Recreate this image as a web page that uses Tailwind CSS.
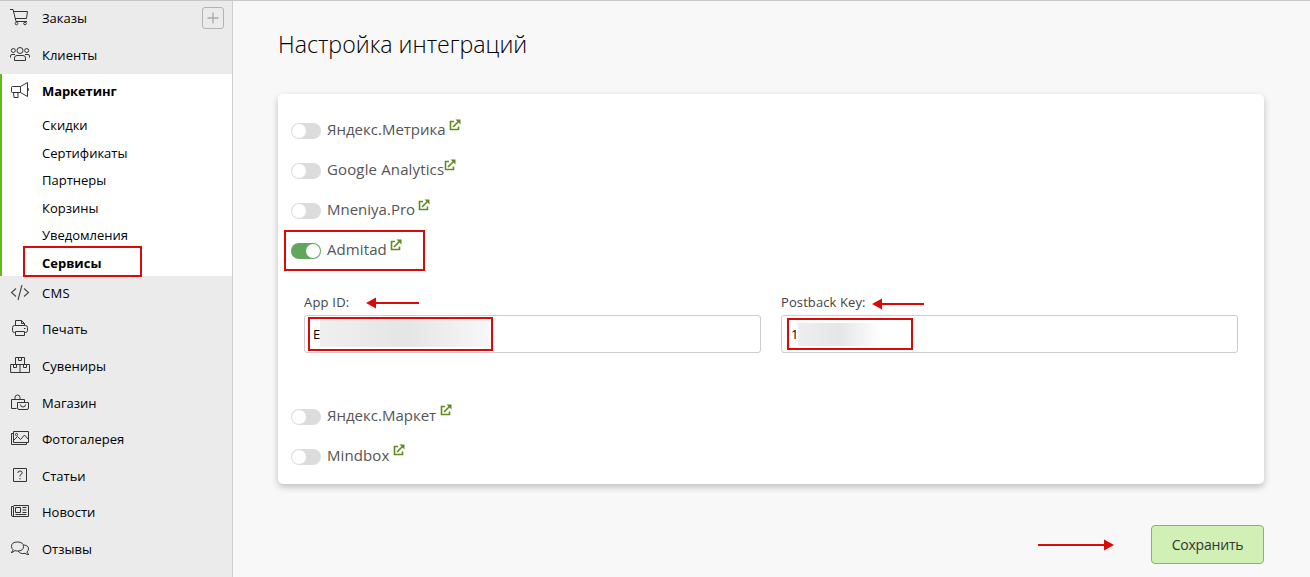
<!DOCTYPE html>
<html lang="ru">
<head>
<meta charset="utf-8">
<title>Настройка интеграций</title>
<script src="https://cdn.jsdelivr.net/npm/@tailwindcss/browser@4"></script>
</head>
<body class="relative h-[577px] w-[1310px] overflow-hidden bg-[#f8f8f8] font-['Open_Sans','Noto_Sans',sans-serif] text-black">
<svg class="hidden">
  <symbol id="ext" viewBox="0 0 12 12"><path d="M5 2.500H1.500v8h8V7.500M4 8 9.500 2.500" fill="none" stroke="#5f8a1e" stroke-width="1.600"/><path d="M6.500 .5H11.500V5.500Z" fill="#5f8a1e"/></symbol>
</svg>
<div class="flex h-full">
  <aside class="h-full w-[233px] shrink-0 border-r border-[#cfcfcf] bg-[#ebebeb] text-[13px] leading-[18px]">
    <div class="flex h-[37px] items-center pb-0.5 pl-2.5">
      <svg class="h-5 w-5" viewBox="0 0 20 20" fill="none" stroke="#333" stroke-width="1"><path d="M0 1.500h3L6 13.500h11M3.700 3.500H17.500L16.500 10.500H5"/><circle cx="6.500" cy="15.500" r="1.300"/><circle cx="15" cy="15.500" r="1.300"/></svg>
      <span class="ml-3">Заказы</span>
      <span class="mr-2 ml-auto flex h-[22px] w-[22px] items-center justify-center rounded-[3px] border border-[#b3b3b3]"><svg class="h-3 w-3" viewBox="0 0 12 12" stroke="#aaa" stroke-width="1.300"><path d="M6 .5v11M.5 6h11"/></svg></span>
    </div>
    <div class="flex h-[37px] items-center pb-0.5 pl-2.5">
      <svg class="h-5 w-5" viewBox="0 0 20 20" fill="none" stroke="#333" stroke-width="1"><circle cx="10" cy="5.500" r="3"/><circle cx="3.300" cy="5.500" r="2"/><circle cx="16.700" cy="5.500" r="2"/><path d="M4.500 15.500v-2.500q0-2.500 2.500-2.500h6q2.500 0 2.500 2.500v2.500ZM.5 12.500v-1.500q0-1.500 1.500-1.500h3M19.500 12.500v-1.500q0-1.500-1.500-1.500h-3"/></svg>
      <span class="ml-3">Клиенты</span>
    </div>
    <div class="h-[202px] border-l-2 border-[#62bb14] bg-white pl-2">
      <div class="flex h-9 items-center pb-0.5 font-bold">
        <svg class="h-5 w-5" viewBox="0 0 20 20" fill="none" stroke="#333" stroke-width="1"><path d="M10.500 5.500h-8Q1.500 5.500 1.500 6.500v4Q1.500 11.500 2.500 11.500h8ZM10.500 5.500 17.500 1.500v14l-7-4M3.500 11.500l.5 5h4v-5M17.500 7q1 0 1 1.500t-1 1.500"/></svg>
        <span class="ml-3 tracking-[-.1px]">Маркетинг</span>
      </div>
      <div class="mt-0.5 pl-8 leading-[27.600px]">
        <div>Скидки</div><div>Сертификаты</div><div>Партнеры</div><div>Корзины</div><div>Уведомления</div><div class="font-bold">Сервисы</div>
      </div>
    </div>
    <div class="flex h-[36.600px] items-center pb-[3px] pl-2.5">
      <svg class="h-5 w-5" viewBox="0 0 20 20" fill="none" stroke="#444" stroke-width="1.100"><path d="M6 5.500 1.500 9.500 6 13.500M14 5.500l4.500 4-4.500 4M12 2 8 17"/></svg>
      <span class="ml-3 tracking-[.3px]">CMS</span>
    </div>
    <div class="flex h-[36.600px] items-center pb-[3px] pl-2.5">
      <svg class="h-5 w-5" viewBox="0 0 20 20" fill="none" stroke="#333" stroke-width="1"><path d="M5.500 6.500v-5h6l3 3v2M11.500 1.500v3h3M5.500 13.500h-1q-2 0-2-2v-3q0-2 2-2h11q2 0 2 2v3q0 2-2 2h-1M5.500 12.500h9v4h-9ZM14 9.500h1.500"/></svg>
      <span class="ml-3">Печать</span>
    </div>
    <div class="flex h-[36.600px] items-center pb-[3px] pl-2.5">
      <svg class="h-5 w-5" viewBox="0 0 20 20" fill="none" stroke="#333" stroke-width="1"><path d="M.6 8.500h18.900v8H.6ZM10 8.500v8M5.500 8.500v-7h9v7M8.500 1.500v3h3v-3M3.500 8.500v3h3v-3M13.500 8.500v3h3v-3"/></svg>
      <span class="ml-3">Сувениры</span>
    </div>
    <div class="flex h-[36.600px] items-center pb-[3px] pl-2.5">
      <svg class="h-5 w-5" viewBox="0 0 20 20" fill="none" stroke="#333" stroke-width="1"><path d="M6.500 15.500h-5v-9h13v3M5 6.500v-2q0-2.500 2.500-2.500T10 4.500v2M7.500 9.500h11v5.500q0 1.500-1.500 1.500H9q-1.500 0-1.500-1.500ZM10.500 11.500q0 2.500 2.500 2.500t2.500-2.500"/></svg>
      <span class="ml-3">Магазин</span>
    </div>
    <div class="flex h-[36.600px] items-center pb-[3px] pl-2.5">
      <svg class="h-5 w-5" viewBox="0 0 20 20" fill="none" stroke="#333" stroke-width="1"><path d="M3.500 2.500h15v11h-15ZM3.500 4.500h-2v11h15v-2M4 11l3.500-3.500 3 3 4-4.500 4 4.500"/><circle cx="6.500" cy="5.500" r="1.100"/></svg>
      <span class="ml-3">Фотогалерея</span>
    </div>
    <div class="flex h-[36.600px] items-center pb-[3px] pl-2.5">
      <svg class="h-5 w-5" viewBox="0 0 20 20" fill="none" stroke="#333" stroke-width="1"><path d="M3.500 2.500h13v13h-13ZM7.800 7q0-2 2.200-2t2.200 1.800Q12.200 8 10 9.300v1.200M10 12v1.300"/></svg>
      <span class="ml-3">Статьи</span>
    </div>
    <div class="flex h-[36.600px] items-center pb-[3px] pl-2.5">
      <svg class="h-5 w-5" viewBox="0 0 20 20" fill="none" stroke="#333" stroke-width="1"><path d="M3.500 3.500h15v11H3Q1.500 14.500 1.500 13V4.500h2v9.500M5.500 5.500h5v5h-5ZM12.500 5.500h4M12.500 8h4M12.500 10.500h4M5.500 12.500h11"/></svg>
      <span class="ml-3">Новости</span>
    </div>
    <div class="flex h-[36.600px] items-center pb-[3px] pl-2.5">
      <svg class="h-5 w-5" viewBox="0 0 20 20" fill="none" stroke="#333" stroke-width="1"><path d="M1 13.500q1.700-.8 2.200-2.700Q1.500 9.500 1.500 7.500q0-4.500 6-4.500t6 4.500-6 4.500q-1.500 0-2.500-.4Q3 13.500 1 13.500M13.500 6q5 .3 5 4 0 1.800-1.600 3 .3 1.500 2.100 2.500-2.200.2-4-1.200-5 1.200-6.700-2.300"/></svg>
      <span class="ml-3">Отзывы</span>
    </div>
  </aside>

  <main class="flex-1 pt-7 pr-[46px] pl-[45px]">
    <h1 class="h-[66px] text-[23.200px] leading-8 font-[350]">Настройка интеграций</h1>
    <section class="h-[390px] rounded-[5px] bg-white px-[13px] pt-[15px] text-[15px] text-[#555] shadow-[0_3px_7px_rgba(0,0,0,.23)]">
      <div class="flex h-10 items-center"><span class="mt-1 mr-1.5 h-4 w-[30px] rounded-full bg-[#dcdcdc] p-px"><i class="block h-3.5 w-3.5 rounded-full bg-white"></i></span><span>Яндекс.Метрика</span><svg class="mb-2 ml-[3px] h-3 w-3"><use href="#ext"/></svg></div>
      <div class="flex h-10 items-center"><span class="mt-1 mr-1.5 h-4 w-[30px] rounded-full bg-[#dcdcdc] p-px"><i class="block h-3.5 w-3.5 rounded-full bg-white"></i></span><span class="tracking-[.14px]">Google Analytics</span><svg class="mb-2 h-3 w-3"><use href="#ext"/></svg></div>
      <div class="flex h-10 items-center"><span class="mt-1 mr-1.5 h-4 w-[30px] rounded-full bg-[#dcdcdc] p-px"><i class="block h-3.5 w-3.5 rounded-full bg-white"></i></span><span>Mneniya.Pro</span><svg class="mb-2 ml-[3px] h-3 w-3"><use href="#ext"/></svg></div>
      <div class="flex h-10 items-center"><span class="mt-1 mr-1.5 flex h-4 w-[30px] justify-end rounded-full bg-[#62a65e] p-px"><i class="block h-3.5 w-3.5 rounded-full bg-white"></i></span><span class="tracking-[.1px]">Admitad</span><svg class="mb-2 ml-[3px] h-3 w-3"><use href="#ext"/></svg></div>
      <div class="grid h-[126px] grid-cols-2 gap-5 px-[13px] pt-6 text-[13px] leading-[18px] text-[#444]">
        <div><div class="h-[22px] tracking-[.2px]">App ID:</div><div class="flex h-[38px] items-center rounded-[3px] border border-[#ccc] pl-2 text-black"><span>E</span><i class="mb-1 h-[29px] w-[170px] bg-linear-to-r from-[#f0f0f0] via-[#e5e5e5] to-[#f7f8f7]"></i></div></div>
        <div><div class="h-[22px] tracking-[.1px]">Postback Key:</div><div class="flex h-[38px] items-center rounded-[3px] border border-[#ccc] pl-[9px] text-black"><span>1</span><i class="h-[23px] w-[84px] bg-linear-to-r from-[#eee] via-[#e6e6e6] to-white"></i></div></div>
      </div>
      <div class="flex h-10 items-center"><span class="mt-1 mr-1.5 h-4 w-[30px] rounded-full bg-[#dcdcdc] p-px"><i class="block h-3.5 w-3.5 rounded-full bg-white"></i></span><span>Яндекс.Маркет</span><svg class="mb-2.5 ml-1 h-3 w-3"><use href="#ext"/></svg></div>
      <div class="flex h-10 items-center"><span class="mt-1 mr-1.5 h-4 w-[30px] rounded-full bg-[#dcdcdc] p-px"><i class="block h-3.5 w-3.5 rounded-full bg-white"></i></span><span class="tracking-[.1px]">Mindbox</span><svg class="mb-2.5 ml-1 h-3 w-3"><use href="#ext"/></svg></div>
    </section>
    <div class="mt-[41px] flex justify-end"><button class="h-[39px] w-[113px] rounded-[4px] border border-[#8ab84a] bg-[#d0f0b5] text-[14px] tracking-[-.2px] text-[#333]">Сохранить</button></div>
  </main>
</div>
<div class="absolute top-0 left-0 h-px w-full bg-[#c8c8c8]"></div>
<div class="absolute top-[246px] left-[23px] h-[31px] w-[119px] border-2 border-[#d90a0a]"></div>
<div class="absolute top-[230px] left-[284px] h-[41px] w-[141px] border-2 border-[#d90a0a]"></div>
<div class="absolute top-[317px] left-[308px] h-[34px] w-[185px] border-2 border-[#d90a0a]"></div>
<div class="absolute top-[318px] left-[787px] h-[32px] w-[126px] border-2 border-[#d90a0a]"></div>
<svg class="absolute inset-0 h-full w-full" fill="#d90a0a"><path d="M366 303l10-5.500v4.500h43v2h-43v4.500ZM872 304l10-5.500v4.500h42v2h-42v4.500ZM1114 545l-10-5.500v4.500h-66v2h66v4.500Z"/></svg>
</body>
</html>
